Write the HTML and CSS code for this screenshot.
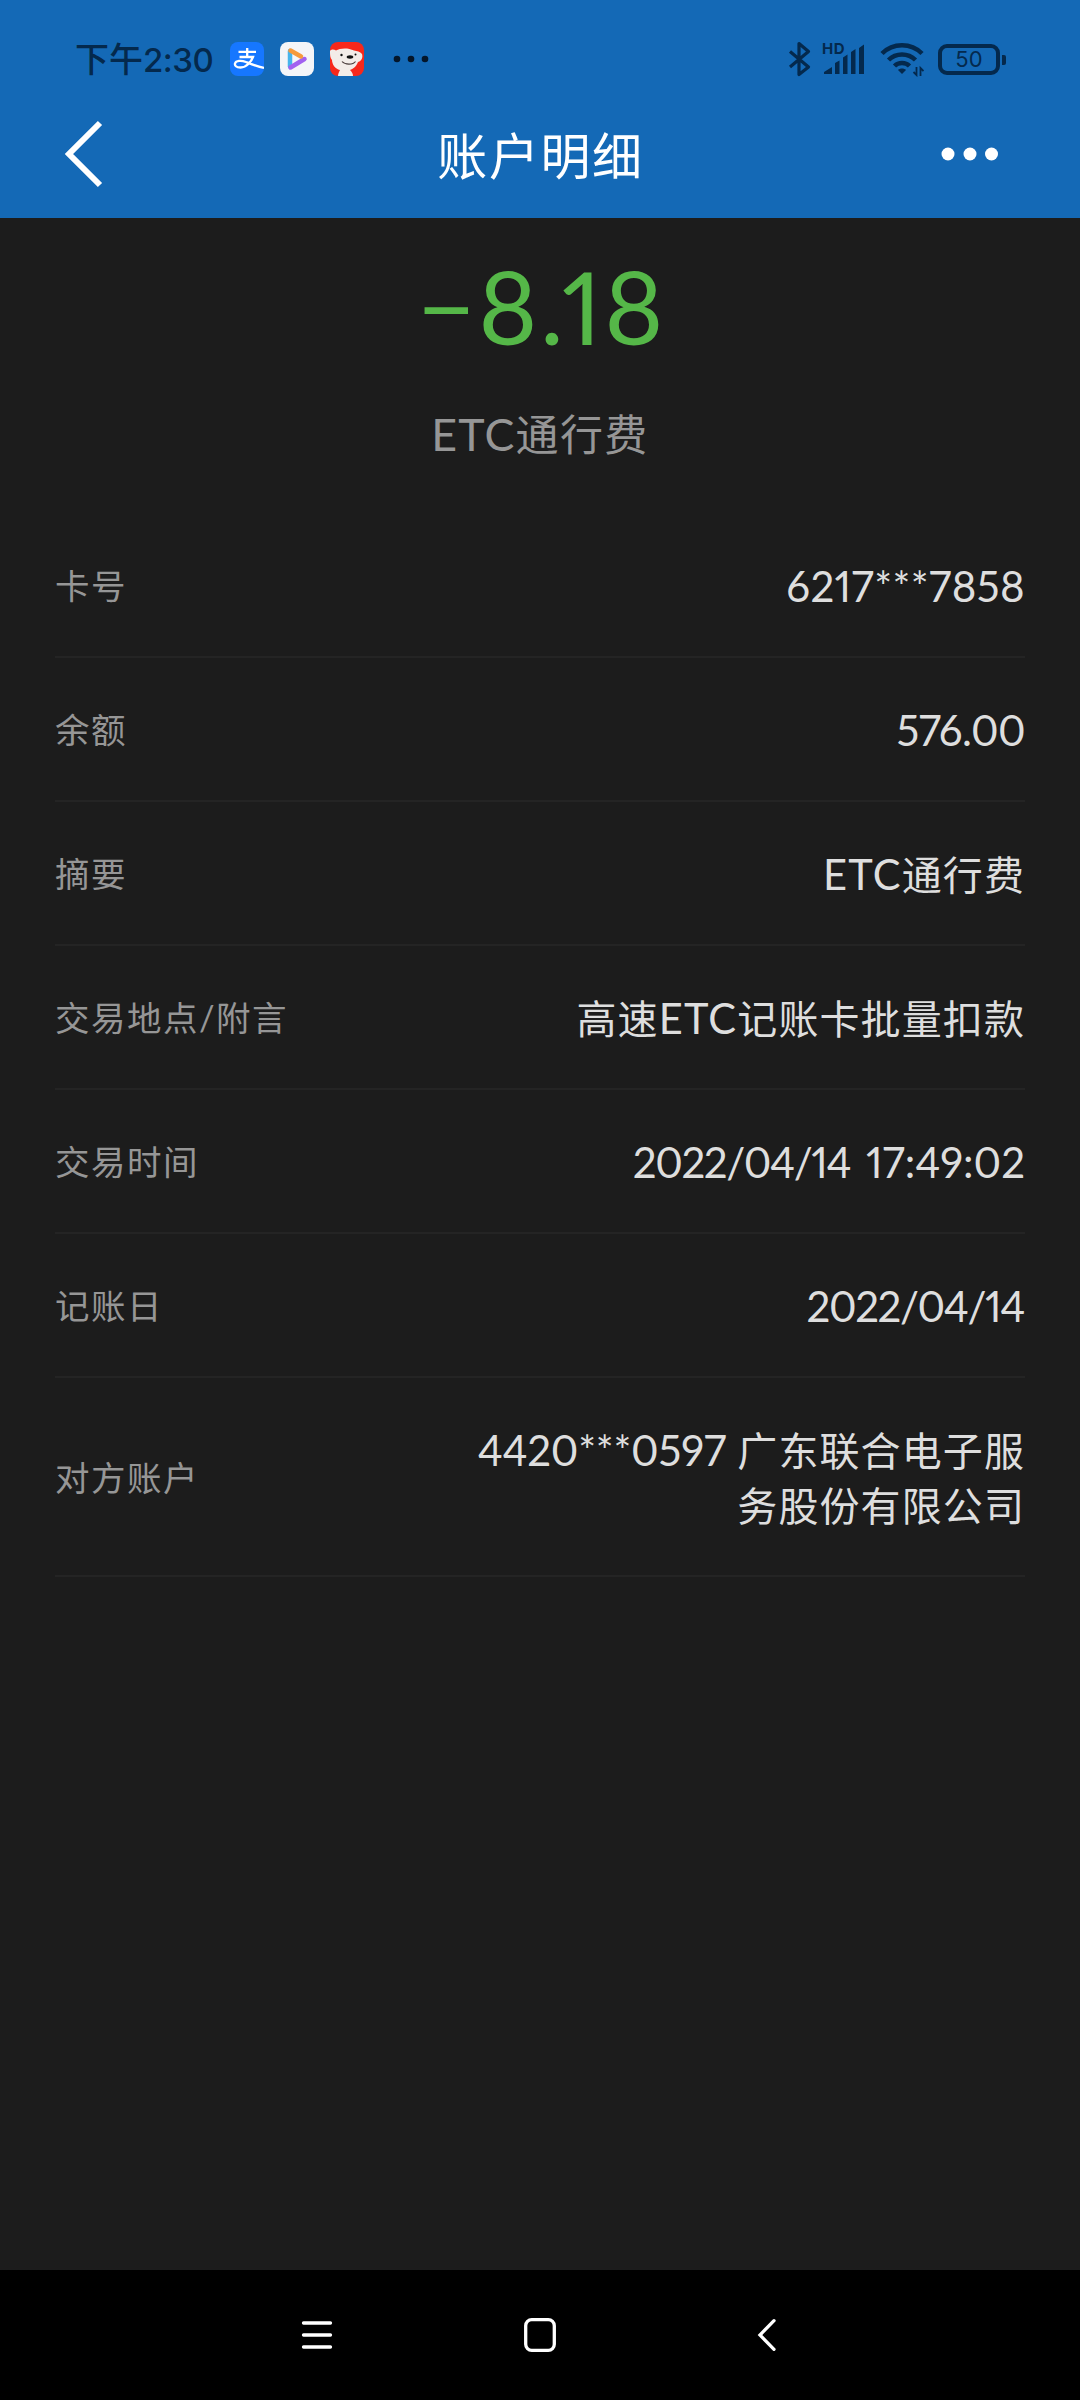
FILE: index.html
```html
<!DOCTYPE html>
<html lang="zh-CN">
<head>
    <meta charset="UTF-8">
    <meta name="viewport" content="width=device-width, initial-scale=1.0">
    <title>账户明细</title>
    <link rel="stylesheet" href="styles.css">
</head>
<body>
    <header class="header">
      <div class="status-bar">
        <div class="status-left">
          <span class="time">下午<span class="clock">2:30</span></span>
          <svg class="app-icon" viewBox="0 0 34 34">
            <rect width="34" height="34" rx="8" fill="#1677ff"/>
            <path d="M8.500 9.800H26M17.200 6v9M9.500 15H23C21.500 19 17 25.500 10.500 25.500C6 25.500 4.500 23.500 5 21.500C6 18.500 11 18 16 20C21 22 27 24.500 34 26" fill="none" stroke="#fff" stroke-width="2.300"/>
          </svg>
          <svg class="app-icon" viewBox="0 0 34 34">
            <rect width="34" height="34" rx="8" fill="#f4f5f8"/>
            <path d="M10 9v15.500" stroke="#46b4ec" stroke-width="4.500" stroke-linecap="round"/>
            <path d="M10.500 25.500L24.500 17" stroke="#a261f0" stroke-width="4.500" stroke-linecap="round"/>
            <path d="M10.500 8.500L21 14.500" stroke="#f59a3c" stroke-width="4.500" stroke-linecap="round"/>
          </svg>
          <svg class="app-icon" viewBox="0 0 34 34">
            <rect width="34" height="34" rx="8" fill="#f7281b"/>
            <path d="M0 9C1 7 4 7 6 8.500C10 6 18 5.500 24 8.500C27 9 30 9.500 32 12C33 15 32 19 28 20C26 25 23 27 20 28C22 30 23 32 23 34H8C8 32 9 30 10 28C5 27 2 22 2 18C0 16 0 13 0 9Z" fill="#f3ece8"/>
            <path d="M12 19.500C15 23 23 23 25.500 19.500" fill="none" stroke="#4a3c3a" stroke-width="1.100"/>
            <ellipse cx="20" cy="15" rx="3.300" ry="1.700" fill="#111"/>
            <circle cx="11.500" cy="13" r="1.200" fill="#111"/>
            <circle cx="25.500" cy="12.500" r="1" fill="#111"/>
          </svg>
          <svg class="more-apps" viewBox="0 0 36 8" fill="#04162a">
            <circle cx="4" cy="4" r="3.300"/><circle cx="18" cy="4" r="3.300"/><circle cx="32" cy="4" r="3.300"/>
          </svg>
        </div>
        <div class="status-right">
          <svg class="bluetooth" viewBox="0 0 24 36" fill="none" stroke="#04294d" stroke-width="3.200">
            <path d="M2 10.500L20.500 26L11 33.500V2.500L20.500 10.500L2 26" stroke-linejoin="round"/>
          </svg>
          <div class="signal">
            <span class="hd">HD</span>
            <svg viewBox="0 0 42 32" fill="#04294d">
              <path d="M1 31V29L9 24V31ZM12 31V20L16.500 17.500V31ZM20 31V14.500L24.500 11.500V31ZM28 31V9L32.500 6V31ZM36 31V5L41 1.500V31Z"/>
            </svg>
          </div>
          <svg class="wifi" viewBox="0 0 44 36" fill="none" stroke="#04294d" stroke-width="4.500">
            <path d="M2 12.500C13 1.500 31 1.500 42 12.500M8.500 19C16 11.500 28 11.500 35.500 19M14.500 25C18.500 21 25.500 21 29.500 25"/>
            <path d="M18 29C20 27 24 27 26 29L22 33Z" fill="#04294d" stroke="none"/>
            <path d="M36.500 26V34L33.500 31M40.500 35V27L43.500 30" stroke-width="1.800"/>
          </svg>
          <div class="battery"><span>50</span></div>
        </div>
      </div>
      <div class="title-bar">
        <svg class="back" viewBox="0 0 40 70" fill="none" stroke="#fff" stroke-width="6">
          <path d="M36 4L5 35L36 66"/>
        </svg>
        <h1>账户明细</h1>
        <svg class="menu-dots" viewBox="0 0 58 14" fill="#fff">
          <circle cx="7" cy="7" r="6.500"/><circle cx="29" cy="7" r="6.500"/><circle cx="50.500" cy="7" r="6.500"/>
        </svg>
      </div>
    </header>

    <main class="content">
      <div class="summary">
        <p class="amount">−8.18</p>
        <p class="summary-title"><span class="latin">ETC</span>通行费</p>
      </div>

      <ul class="details">
        <li>
          <span class="label">卡号</span>
          <span class="value number">6217***7858</span>
        </li>
        <li>
          <span class="label">余额</span>
          <span class="value number balance">576.00</span>
        </li>
        <li>
          <span class="label">摘要</span>
          <span class="value"><span class="latin">ETC</span>通行费</span>
        </li>
        <li>
          <span class="label">交易地点/附言</span>
          <span class="value">高速<span class="latin">ETC</span>记账卡批量扣款</span>
        </li>
        <li>
          <span class="label">交易时间</span>
          <span class="value number datetime"><span class="date">2022/04/14</span> 17:49:02</span>
        </li>
        <li>
          <span class="label">记账日</span>
          <span class="value number date">2022/04/14</span>
        </li>
        <li class="tall">
          <span class="label">对方账户</span>
          <span class="value"><span class="account">4420***0597</span> 广东联合电子服<br>务股份有限公司</span>
        </li>
      </ul>
    </main>

    <nav class="nav-bar">
      <svg class="nav-menu" viewBox="0 0 32 34" fill="none" stroke="#fff" stroke-width="3.300" stroke-linecap="round">
        <path d="M2.500 5H29.500M2.500 17H29.500M2.500 29H29.500"/>
      </svg>
      <svg class="nav-home" viewBox="0 0 32 34" fill="none" stroke="#fff" stroke-width="3.300">
        <rect x="1.700" y="1.700" width="28.600" height="30.600" rx="6"/>
      </svg>
      <svg class="nav-back" viewBox="0 0 20 34" fill="none" stroke="#fff" stroke-width="3.300" stroke-linecap="round">
        <path d="M17 2.700L3 17L17 31.300"/>
      </svg>
    </nav>
</body>
</html>
```

FILE: styles.css
```css
* {
  box-sizing: border-box;
}

body {
  display: flex;
  flex-direction: column;
  height: 2400px;
  margin: 0;
  background-color: #1c1c1c;
  font-family: Lato, "Noto Sans CJK SC", sans-serif;
  font-feature-settings: "pnum";
}

svg {
  display: block;
  flex: none;
}

.header {
  height: 218px;
  background-color: #1469b6;
}

/* status bar */
.status-bar {
  display: flex;
  justify-content: space-between;
  height: 92px;
  padding: 26px 80px 0 75px;
  color: #04294d;
}

.status-left,
.status-right {
  display: flex;
  align-items: center;
}

.time {
  width: 139px;
  margin-right: 16px;
  font-size: 34px;
  font-weight: 500;
  line-height: 40px;
  white-space: nowrap;
}

.clock {
  font-family: Inter, sans-serif;
  font-size: 33px;
  letter-spacing: -0.5px;
}

.app-icon {
  width: 34px;
  height: 34px;
  margin-right: 16px;
}

.more-apps {
  width: 36px;
  height: 8px;
  margin-left: 13px;
}

.bluetooth {
  width: 24px;
  height: 36px;
  margin-right: 11px;
}

.signal {
  position: relative;
  margin-right: 15px;
}

.signal svg {
  width: 42px;
  height: 32px;
}

.hd {
  position: absolute;
  top: -2px;
  left: -1px;
  font: bold 15px/15px Inter, sans-serif;
  letter-spacing: 0.5px;
}

.wifi {
  width: 44px;
  height: 36px;
  margin-right: 14px;
}

.battery {
  position: relative;
  width: 62px;
  height: 31px;
  border: 4px solid #04294d;
  border-radius: 9px;
  font: 22px/23px Inter, sans-serif;
  text-align: center;
}

.battery::after {
  content: "";
  position: absolute;
  top: 7px;
  right: -10px;
  width: 4px;
  height: 10px;
  border-radius: 0 2px 2px 0;
  background-color: #04294d;
}

/* title */
.title-bar {
  display: flex;
  justify-content: space-between;
  align-items: center;
  height: 124px;
  padding: 0 81px 0 64px;
}

.title-bar h1 {
  margin: 0 0 0 36px;
  padding-top: 4px;
  color: #fff;
  font-size: 50px;
  font-weight: 400;
  line-height: 60px;
  letter-spacing: 1.6px;
}

.back {
  width: 40px;
  height: 70px;
}

.menu-dots {
  width: 58px;
  height: 14px;
}

/* account details */
.content {
  flex: 1;
}

.summary {
  height: 296px;
  padding-top: 32px;
  text-align: center;
}

.amount {
  margin: 0;
  padding-left: 3px;
  color: #55b748;
  font-size: 101px;
  line-height: 112px;
  letter-spacing: 2.5px;
}

.summary-title {
  margin: 42px 0 0;
  color: #969696;
  font-size: 43px;
  line-height: 60px;
  letter-spacing: 1.4px;
}

.latin {
  font-size: 1.04em;
  letter-spacing: 1.2px;
}

.details {
  margin: 0 55px;
  padding: 0;
  list-style: none;
}

.details li {
  display: flex;
  justify-content: space-between;
  align-items: center;
  height: 144px;
  border-bottom: 2px solid #242424;
}

.details .tall {
  height: 199px;
}

.label {
  padding-bottom: 2px;
  color: #969696;
  font-size: 34.5px;
  letter-spacing: 1.5px;
}

.value {
  padding-top: 3px;
  color: #dedede;
  font-size: 40px;
  line-height: 55px;
  letter-spacing: 1.1px;
  text-align: right;
}

.number {
  font-size: 42px;
  letter-spacing: 0.4px;
}

.balance {
  letter-spacing: -0.6px;
}

.date {
  padding-right: 1px;
  letter-spacing: -1.4px;
}

.datetime {
  letter-spacing: 0;
  word-spacing: 4px;
}

.account {
  font-size: 42px;
  letter-spacing: -0.2px;
}

/* system navigation */
.nav-bar {
  display: flex;
  justify-content: space-between;
  align-items: center;
  height: 130px;
  padding: 0 303px 0 301px;
  background-color: #000;
}

.nav-menu,
.nav-home {
  width: 32px;
  height: 34px;
}

.nav-home {
  margin-right: 11px;
}

.nav-back {
  width: 20px;
  height: 34px;
}
```
